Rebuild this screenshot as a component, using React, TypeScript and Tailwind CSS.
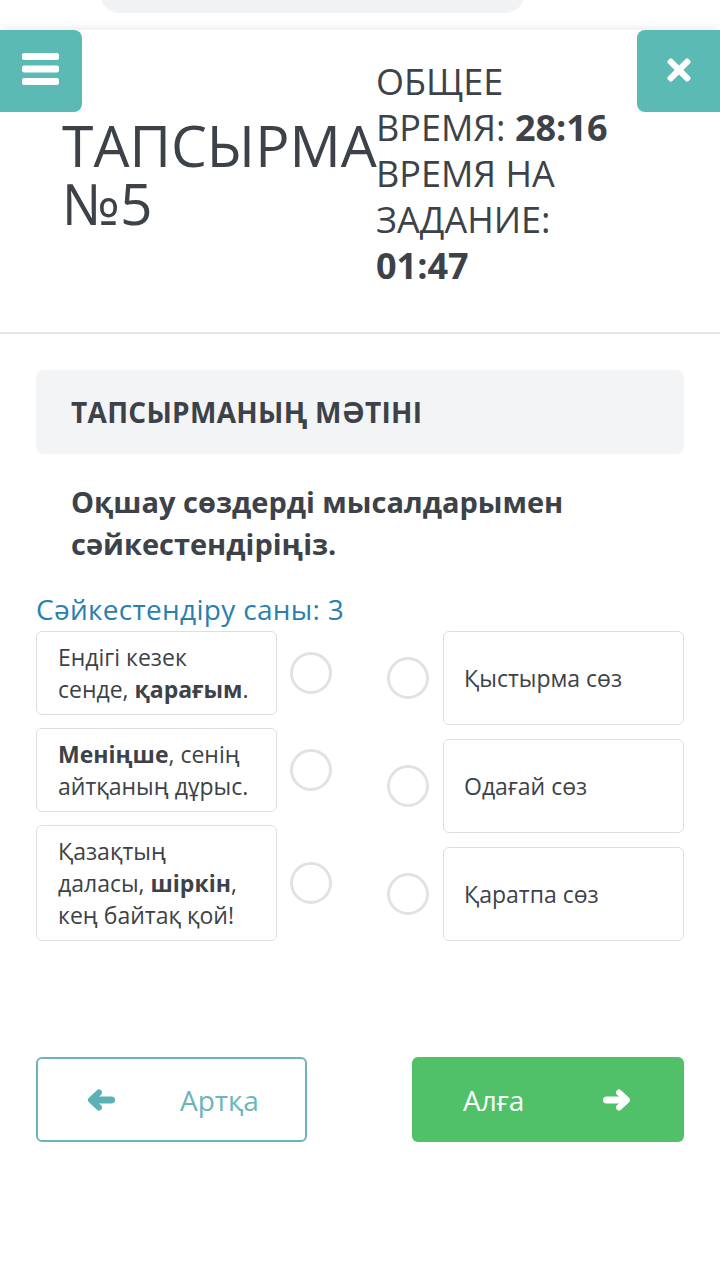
import { FaTimes } from 'react-icons/fa';

const leftItems = [
  { id: 1, lines: [<>Ендігі кезек</>, <>сенде, <b className="font-bold">қарағым</b>.</>] },
  { id: 2, lines: [<><b className="font-bold">Меніңше</b>, сенің</>, <>айтқаның дұрыс.</>] },
  { id: 3, lines: [<>Қазақтың</>, <>даласы, <b className="font-bold">шіркін</b>,</>, <>кең байтақ қой!</>] },
];

const rightItems = ['Қыстырма сөз', 'Одағай сөз', 'Қаратпа сөз'];

const Circle = () => (
  <div className="w-[42px] h-[42px] rounded-full border-[3px] border-[#dfe3e6] bg-white shrink-0" />
);

const Arrow = ({ dir, className }: { dir: 'left' | 'right'; className?: string }) => (
  <svg
    viewBox="0 0 28 22"
    className={className}
    style={dir === 'right' ? { transform: 'scaleX(-1)' } : undefined}
    fill="none"
    stroke="currentColor"
    strokeLinecap="round"
    strokeLinejoin="round"
  >
    <path d="M12 3.5 L4 11 L12 18.5" strokeWidth="6" />
    <path d="M6 11 H24.5" strokeWidth="7" />
  </svg>
);

const Bars = () => (
  <svg viewBox="0 0 37 32" className="w-[37px] h-[32px]" fill="currentColor">
    <rect x="0" y="0" width="37" height="7" rx="2" />
    <rect x="0" y="12.5" width="37" height="7" rx="2" />
    <rect x="0" y="25" width="37" height="7" rx="2" />
  </svg>
);

export default function App() {
  return (
    <div
      className="relative w-[720px] min-h-[1274px] bg-white text-[#3d4249] overflow-hidden"
      style={{ fontFamily: '"Open Sans", "Noto Sans", sans-serif' }}
    >
      {/* scrolled-off search pill */}
      <div className="h-[30px] flex justify-center">
        <div className="w-[425px] h-[40px] -mt-[27px] rounded-full bg-[#f1f2f4] -translate-x-[48px]" />
      </div>

      {/* header */}
      <div className="relative shadow-[0_-5px_8px_-3px_rgba(0,0,0,0.08)]">
        <button className="absolute left-0 top-0 w-[82px] h-[82px] bg-[#5bbab4] rounded-r-[8px] flex items-center justify-center text-white">
          <span className="-mt-[4px] -ml-[1px]">
            <Bars />
          </span>
        </button>
        <button className="absolute right-0 top-0 w-[83px] h-[82px] bg-[#5bbab4] rounded-l-[8px] flex items-center justify-center text-white">
          <FaTimes className="w-[30px] h-[34px] -mt-[2px]" />
        </button>

        <div className="flex items-center pl-[62px] pt-[29px] pb-[43px]">
          <div className="w-[314px] shrink-0 text-[57px] leading-[58px] font-normal whitespace-nowrap">
            ТАПСЫРМА
            <br />
            №5
          </div>
          <div className="text-[36px] leading-[46px]">
            <div>ОБЩЕЕ</div>
            <div>
              ВРЕМЯ: <span className="font-bold">28:16</span>
            </div>
            <div>ВРЕМЯ НА</div>
            <div>ЗАДАНИЕ:</div>
            <div className="font-bold">01:47</div>
          </div>
        </div>
      </div>

      <div className="h-[2px] bg-[#e5e6e8]" />

      <div className="px-[36px] pt-[36px]">
        <div className="h-[84px] rounded-[8px] bg-[#f3f4f6] flex items-center px-[35px]">
          <span className="text-[28px] font-bold tracking-[0.3px]">ТАПСЫРМАНЫҢ МӘТІНІ</span>
        </div>

        <p className="pl-[35px] mt-[27px] text-[29px] leading-[42px] font-bold">
          Оқшау сөздерді мысалдарымен
          <br />
          сәйкестендіріңіз.
        </p>

        <div className="mt-[26px] text-[28px] leading-[36px] tracking-[0.3px] text-[#2a7fae]">Сәйкестендіру саны: 3</div>

        <div className="mt-[4px] flex">
          <div className="flex flex-col gap-[13px]">
            {leftItems.map((item) => (
              <div key={item.id} className="flex items-center">
                <div className="w-[241px] border border-[#dcdfe2] rounded-[6px] pl-[21px] pr-[4px] py-[9px] text-[23px] leading-[32px] whitespace-nowrap">
                  {item.lines.map((l, i) => (
                    <div key={i}>{l}</div>
                  ))}
                </div>
                <div className="ml-[13px]">
                  <Circle />
                </div>
              </div>
            ))}
          </div>

          <div className="ml-[55px] flex-1 flex flex-col gap-[14px]">
            {rightItems.map((t) => (
              <div key={t} className="flex-1 flex items-center">
                <Circle />
                <div className="ml-[14px] h-full w-[241px] border border-[#dcdfe2] rounded-[6px] flex items-center pl-[20px] text-[23px]">
                  {t}
                </div>
              </div>
            ))}
          </div>
        </div>

        <div className="mt-[116px] flex justify-between">
          <button className="w-[271px] h-[85px] border-2 border-[#6db4b9] rounded-[6px] flex items-center text-[#6cb5b8] text-[28px]">
            <Arrow dir="left" className="ml-[49px] w-[28px] h-[22px] text-[#5bb1b5]" />
            <span className="ml-[65px]">Артқа</span>
          </button>
          <button className="w-[272px] h-[85px] bg-[#50c168] rounded-[6px] flex items-center text-white text-[28px]">
            <span className="ml-[51px]">Алға</span>
            <Arrow dir="right" className="ml-[79px] w-[28px] h-[22px]" />
          </button>
        </div>
      </div>
    </div>
  );
}
